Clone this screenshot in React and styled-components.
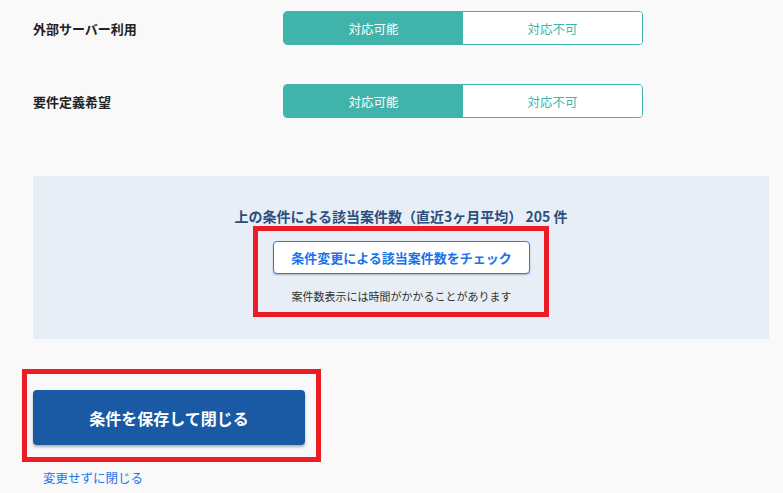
import React, { useState } from 'react';
import styled, { createGlobalStyle } from 'styled-components';

const GlobalStyle = createGlobalStyle`
  body {
    margin: 0;
    background: #f9f9f9;
    font-family: "Noto Sans CJK JP", "Noto Sans", sans-serif;
  }
`;

const conditions = [
    { id: 'server', label: '外部サーバー利用' },
    { id: 'spec', label: '要件定義希望' },
];

function App() {
    const [values, setValues] = useState({ server: true, spec: true });

    return (
        <>
            <GlobalStyle />
            <Page>
                <Rows>
                    {conditions.map((c) => (
                        <Row key={c.id}>
                            <Label>{c.label}</Label>
                            <Toggle>
                                <ToggleOption
                                    $active={values[c.id]}
                                    onClick={() => setValues({ ...values, [c.id]: true })}
                                >
                                    対応可能
                                </ToggleOption>
                                <ToggleOption
                                    $active={!values[c.id]}
                                    onClick={() => setValues({ ...values, [c.id]: false })}
                                >
                                    対応不可
                                </ToggleOption>
                            </Toggle>
                        </Row>
                    ))}
                </Rows>

                <CountPanel>
                    <CountText>上の条件による該当案件数（直近3ヶ月平均） 205 件</CountText>
                    <Highlight $pad="10px 14px 8px 15px">
                        <CheckButton>条件変更による該当案件数をチェック</CheckButton>
                        <Note>案件数表示には時間がかかることがあります</Note>
                    </Highlight>
                </CountPanel>

                <SaveArea>
                    <Highlight $pad="16px 11px 12px 6px">
                        <SaveButton>条件を保存して閉じる</SaveButton>
                    </Highlight>
                </SaveArea>

                <CloseLink href="#">変更せずに閉じる</CloseLink>
            </Page>
        </>
    );
}

const Page = styled.div`
  display: flex;
  flex-direction: column;
  align-items: flex-start;
  padding: 11px 14px 0 33px;
`;

const Rows = styled.div`
  display: flex;
  flex-direction: column;
  gap: 39px;
`;

const Row = styled.div`
  display: flex;
  align-items: center;
`;

const Label = styled.div`
  width: 250px;
  font-size: 13px;
  font-weight: 700;
  color: #222;
`;

const Toggle = styled.div`
  display: flex;
  width: 360px;
  height: 34px;
  border: 1px solid #40b4ab;
  border-radius: 4px;
  overflow: hidden;
  box-sizing: border-box;
`;

const ToggleOption = styled.div`
  flex: 1;
  display: flex;
  align-items: center;
  justify-content: center;
  font-size: 12.5px;
  cursor: pointer;
  background: ${(p) => (p.$active ? '#40b4ab' : '#fff')};
  color: ${(p) => (p.$active ? '#fff' : '#40b4ab')};
`;

const CountPanel = styled.div`
  margin-top: 58px;
  width: 736px;
  height: 163px;
  box-sizing: border-box;
  background: #e8eef6;
  display: flex;
  flex-direction: column;
  align-items: center;
  padding-top: 30px;
`;

const CountText = styled.div`
  font-size: 14px;
  font-weight: 700;
  color: #2a4e7f;
  line-height: 20px;
`;

const Highlight = styled.div`
  border: 5px solid #ed1c24;
  padding: ${(p) => p.$pad};
  display: flex;
  flex-direction: column;
  align-items: center;
`;

const CheckButton = styled.button`
  width: 257px;
  height: 33px;
  background: #fff;
  border: 1px solid #1a7ff0;
  border-radius: 4px;
  box-shadow: 0 1px 2px rgba(0, 0, 0, 0.25);
  font-family: inherit;
  font-size: 13px;
  font-weight: 700;
  color: #1a73e8;
  cursor: pointer;
`;

const Note = styled.div`
  margin-top: 14px;
  font-size: 11px;
  color: #333;
  line-height: 16px;
`;

const SaveArea = styled.div`
  display: flex;
  margin: 30px 0 0 -11px;
`;

const SaveButton = styled.button`
  width: 272px;
  height: 55px;
  background: #1a5aa5;
  border: none;
  border-radius: 4px;
  box-shadow: 0 2px 3px rgba(0, 0, 0, 0.3);
  font-family: inherit;
  font-size: 16px;
  font-weight: 700;
  color: #fff;
  cursor: pointer;
`;

const CloseLink = styled.a`
  display: inline-block;
  margin: 7px 0 0 10px;
  font-size: 12.5px;
  color: #1a73e8;
  text-decoration: none;
  line-height: 18px;
`;

export default App;
